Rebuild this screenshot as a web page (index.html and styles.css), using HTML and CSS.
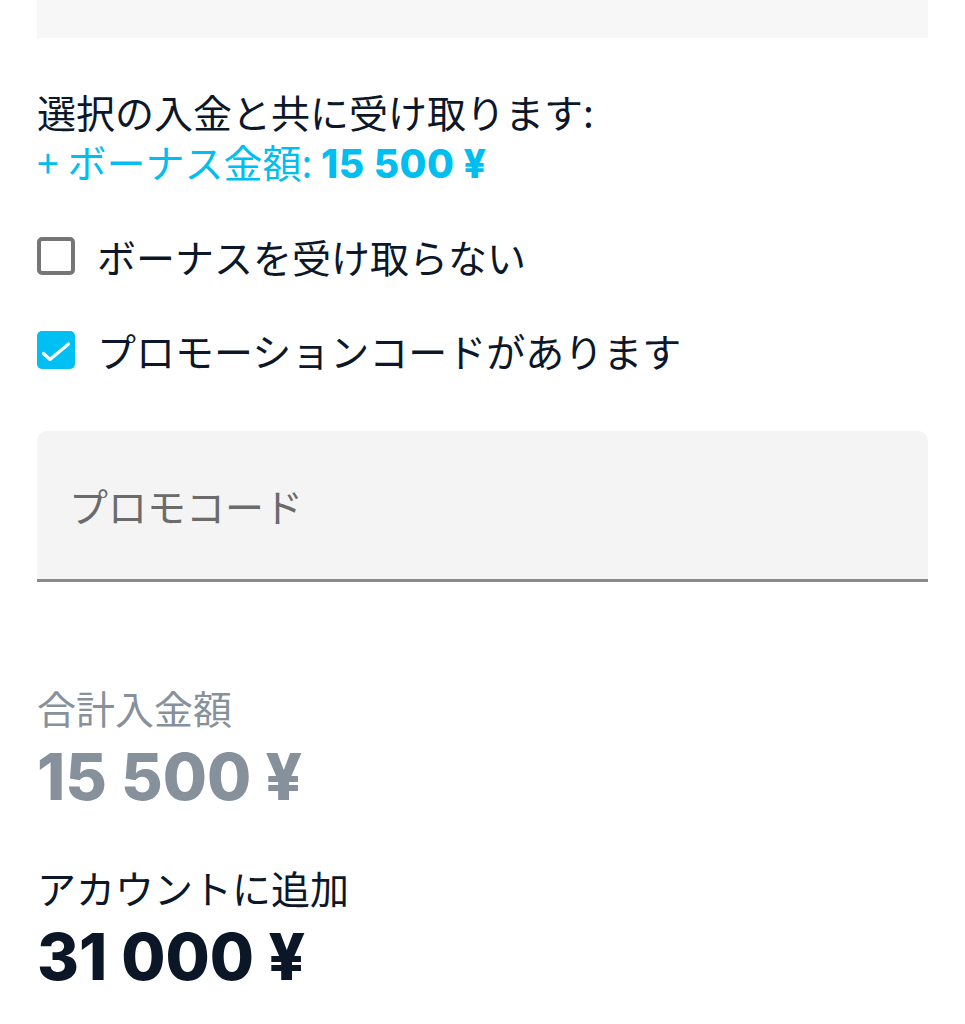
FILE: index.html
```html
<!DOCTYPE html>
<html lang="ja">
<head>
    <meta charset="UTF-8">
    <meta name="viewport" content="width=device-width, initial-scale=1.0">
    <title>入金</title>
    <link rel="stylesheet" href="styles.css">
</head>
<body>
    <div class="container">
        <div class="field-top"></div>

        <div class="bonus-info">
            <div class="bonus-title">選択の入金と共に受け取ります:</div>
            <div class="bonus-amount">+ ボーナス金額: <b class="num">15 500 ¥</b></div>
        </div>

        <label class="check-row">
            <span class="checkbox"></span>
            <span>ボーナスを受け取らない</span>
        </label>

        <label class="check-row second">
            <span class="checkbox checked">
                <svg width="38" height="38" viewBox="0 0 38 38">
                    <path d="M6.5 22.5 L13 28.5 L31.5 13" fill="none" stroke="#fff" stroke-width="3.2" stroke-linecap="round" stroke-linejoin="round"/>
                </svg>
            </span>
            <span>プロモーションコードがあります</span>
        </label>

        <div class="promo-field">
            <input type="text" placeholder="プロモコード">
        </div>

        <div class="summary">
            <div class="summary-label muted">合計入金額</div>
            <div class="summary-value muted">15 500 ¥</div>
            <div class="summary-label second">アカウントに追加</div>
            <div class="summary-value">31 000 ¥</div>
        </div>
    </div>
</body>
</html>
```

FILE: styles.css
```css
body {
    margin: 0;
    background-color: #fff;
    font-family: "Noto Sans CJK JP", "Noto Sans", sans-serif;
    color: #0c1829;
}

.container {
    padding: 0 37px;
}

.field-top {
    height: 38px;
    background-color: #f7f7f7;
}

.bonus-info {
    margin-top: 48px;
    font-size: 39px;
    line-height: 50px;
}

.bonus-amount {
    color: #00bff0;
}

.num {
    font-family: Inter, "Noto Sans", sans-serif;
    font-weight: 800;
    letter-spacing: 0.5px;
}

.check-row {
    display: flex;
    align-items: center;
    gap: 22px;
    height: 60px;
    margin-top: 37px;
    font-size: 39px;
}

.check-row.second {
    margin-top: 34px;
}

.checkbox {
    width: 38px;
    height: 38px;
    box-sizing: border-box;
    border: 4px solid #767676;
    border-radius: 5px;
    display: flex;
    align-items: center;
    justify-content: center;
    flex-shrink: 0;
}

.checkbox.checked {
    border: none;
    background-color: #00bff3;
}

.promo-field {
    margin-top: 51px;
    height: 151px;
    box-sizing: border-box;
    background-color: #f4f4f4;
    border-radius: 10px 10px 0 0;
    border-bottom: 3px solid #8a8a8a;
    display: flex;
    align-items: center;
    padding: 0 32px;
}

.promo-field input {
    width: 100%;
    border: none;
    background: transparent;
    font-family: "Noto Sans CJK JP", sans-serif;
    font-size: 39px;
    color: #333;
    outline: none;
    padding: 0;
}

.promo-field input::placeholder {
    color: #6b6b6b;
}

.summary {
    margin-top: 100px;
}

.summary-label {
    font-size: 39px;
    line-height: 50px;
}

.summary-label.second {
    margin-top: 50px;
}

.summary-value {
    font-family: Inter, "Noto Sans", sans-serif;
    font-weight: 800;
    font-size: 64px;
    line-height: 70px;
    margin-top: 10px;
    color: #0b1626;
}

.muted {
    color: #87919b;
}
```
